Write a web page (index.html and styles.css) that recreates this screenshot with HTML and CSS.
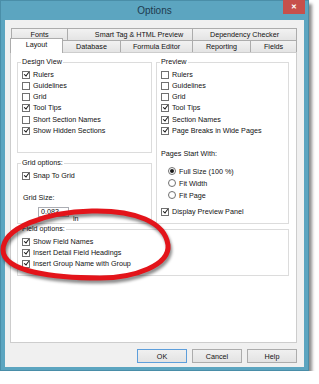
FILE: index.html
```html
<!DOCTYPE html>
<html lang="en">
<head>
    <meta charset="UTF-8">
    <title>Options</title>
    <link rel="stylesheet" href="styles.css">
</head>
<body>

<div class="dialog">
    <div class="titlebar">
        <span class="title">Options</span>
        <span class="close">&#x2715;</span>
    </div>

    <div class="client">
        <div class="tabs">
            <div class="tab-row back">
                <div class="tab t-fonts">Fonts</div>
                <div class="tab t-smart">Smart Tag &amp; HTML Preview</div>
                <div class="tab t-dep">Dependency Checker</div>
            </div>
            <div class="tab-row front">
                <div class="tab t-layout active">Layout</div>
                <div class="tab t-db">Database</div>
                <div class="tab t-formula">Formula Editor</div>
                <div class="tab t-rep">Reporting</div>
                <div class="tab t-fields">Fields</div>
            </div>
        </div>

        <div class="panel">
            <div class="cols">
                <div class="left-col">
                    <fieldset class="group design">
                        <legend>Design View</legend>
                        <div class="check"><span class="box on"></span>Rulers</div>
                        <div class="check"><span class="box"></span>Guidelines</div>
                        <div class="check"><span class="box"></span>Grid</div>
                        <div class="check"><span class="box on"></span>Tool Tips</div>
                        <div class="check spaced"><span class="box"></span>Short Section Names</div>
                        <div class="check"><span class="box on"></span>Show Hidden Sections</div>
                    </fieldset>

                    <fieldset class="group grid-opts">
                        <legend>Grid options:</legend>
                        <div class="check"><span class="box on"></span>Snap To Grid</div>
                        <div class="grid-size">Grid Size:</div>
                        <div class="size-row">
                            <span class="size-input">0.083</span>
                            <span class="unit">in</span>
                        </div>
                    </fieldset>
                </div>

                <fieldset class="group preview">
                    <legend>Preview</legend>
                    <div class="check"><span class="box"></span>Rulers</div>
                    <div class="check"><span class="box"></span>Guidelines</div>
                    <div class="check"><span class="box"></span>Grid</div>
                    <div class="check"><span class="box on"></span>Tool Tips</div>
                    <div class="check spaced"><span class="box on"></span>Section Names</div>
                    <div class="check"><span class="box on"></span>Page Breaks in Wide Pages</div>

                    <div class="pages-start">Pages Start With:</div>
                    <div class="radios">
                        <div class="radio"><span class="dot on"></span>Full Size (100 %)</div>
                        <div class="radio"><span class="dot"></span>Fit Width</div>
                        <div class="radio"><span class="dot"></span>Fit Page</div>
                    </div>
                    <div class="check display"><span class="box on"></span>Display Preview Panel</div>
                </fieldset>
            </div>

            <fieldset class="group fields">
                <legend>Field options:</legend>
                <div class="check"><span class="box on"></span>Show Field Names</div>
                <div class="check"><span class="box on"></span>Insert Detail Field Headings</div>
                <div class="check"><span class="box on"></span>Insert Group Name with Group</div>
            </fieldset>
        </div>

        <div class="buttons">
            <button class="btn default">OK</button>
            <button class="btn">Cancel</button>
            <button class="btn">Help</button>
        </div>
    </div>

    <!-- hand drawn highlight round the field options -->
    <svg class="mark" width="319" height="384" viewBox="0 0 319 384">
        <defs>
            <filter id="soft" x="-10%" y="-20%" width="120%" height="140%">
                <feGaussianBlur stdDeviation="1.6"/>
            </filter>
        </defs>
        <path d="M3,250 C3,228 45,212 92,211 C135,210 165,222 168,245 C170,265 135,278 100,278 C55,278 3,272 3,250 Z"
              fill="none" stroke="rgba(0,0,0,0.45)" stroke-width="5" transform="translate(1.5,3)" filter="url(#soft)"/>
        <path d="M3,250 C3,228 45,212 92,211 C135,210 165,222 168,245 C170,265 135,278 100,278 C55,278 3,272 3,250 Z"
              fill="none" stroke="#e3141a" stroke-width="5"/>
    </svg>
</div>

</body>
</html>
```

FILE: styles.css
```css
/* Win8 style options dialog */
body {
    margin: 0;
    background: #fff;
    font-family: "Liberation Sans", Arial, sans-serif;
    font-size: 7.2px;
    color: #111;
}
.dialog {
    position: relative;
    width: 309px;
    height: 371px;
    box-sizing: border-box;
    background: #5ca5c0;
    border: 1px solid #4a8ea8;
    box-shadow: 3px 4px 3px rgba(0, 0, 0, 0.45);
}
.titlebar {
    display: grid;
    grid-template-columns: 1fr auto 1fr;
    align-items: start;
    height: 19px;
}
.title {
    grid-column: 2;
    font-size: 10px;
    line-height: 19px;
    color: #1d3a4e;
}
.close {
    grid-column: 3;
    justify-self: end;
    width: 22px;
    height: 14px;
    margin-right: 3px;
    margin-top: -1px;
    background: #c7504b;
    color: #fff;
    font-size: 7px;
    font-weight: bold;
    line-height: 14px;
    text-align: center;
}
.client {
    height: 347px;
    margin: 0 4px 0 4px;
    padding: 8px 7px 0 5px;
    box-sizing: border-box;
    background: #f0f0f0;
}

/* tabs */
.tab-row {
    display: flex;
    height: 12px;
}
.tab-row.back {
    margin-left: 1px;
}
.tab {
    box-sizing: border-box;
    height: 12px;
    margin-left: -1px;
    border: 1px solid #acacac;
    border-bottom: none;
    background: linear-gradient(#f2f2f2, #e4e4e4);
    text-align: center;
    line-height: 11px;
    color: #111;
}
.tab:first-child {
    margin-left: 0;
}
.t-fonts { width: 57px; }
.t-smart { width: 126px; padding-left: 18px; }
.t-dep { width: 105px; }
.t-layout { width: 53px; }
.t-db { width: 59px; }
.t-formula { width: 73px; }
.t-rep { width: 59px; }
.t-fields { width: 47px; }
.tab.active {
    position: relative;
    z-index: 2;
    height: 15px;
    margin-top: -2px;
    margin-bottom: -1px;
    background: #fff;
    line-height: 12px;
}

/* tab page */
.panel {
    height: 291px;
    box-sizing: border-box;
    padding: 4px 7px 0 6px;
    background: #fff;
    border: 1px solid #cdcdcd;
}
.cols {
    display: grid;
    grid-template-columns: 135px 133px;
    column-gap: 4px;
}
.group {
    margin: 0;
    padding: 2px 4px 0 4px;
    min-width: 0;
    border: 1px solid #dcdcdc;
}
.group legend {
    padding: 0 1px;
    margin-left: -1px;
    line-height: 10px;
}
.design {
    padding-bottom: 16px;
}
.grid-opts {
    margin-top: 5px;
}
.preview {
    padding-bottom: 6px;
}
.fields {
    padding-bottom: 6px;
}

.check, .radio {
    display: flex;
    align-items: center;
    gap: 3px;
    height: 11px;
    white-space: nowrap;
}
.check.spaced {
    margin-top: 1px;
}
.box {
    position: relative;
    width: 8px;
    height: 8px;
    box-sizing: border-box;
    border: 1px solid #707070;
    background: #fff;
    flex: none;
}
.box.on::after {
    content: "";
    position: absolute;
    left: 2px;
    top: -0.5px;
    width: 1.6px;
    height: 4px;
    border: solid #111;
    border-width: 0 1.5px 1.5px 0;
    transform: rotate(38deg);
}

.grid-size {
    margin-top: 12px;
    margin-left: 1px;
    line-height: 9px;
}
.size-row {
    display: flex;
    align-items: flex-end;
    height: 16px;
    margin-top: 5px;
    padding-left: 16px;
}
.size-input {
    align-self: flex-start;
    width: 31px;
    height: 10px;
    box-sizing: border-box;
    border: 1px solid #abadb3;
    padding-left: 2px;
    line-height: 8px;
    background: #fff;
}
.unit {
    margin-left: 4px;
    line-height: 8px;
}

.pages-start {
    margin-top: 13px;
    line-height: 9px;
}
.radios {
    margin-top: 7px;
    padding-left: 7px;
}
.radio {
    height: 12px;
}
.dot {
    position: relative;
    width: 8px;
    height: 8px;
    box-sizing: border-box;
    border: 1px solid #707070;
    border-radius: 50%;
    background: #fff;
    flex: none;
}
.dot.on::after {
    content: "";
    position: absolute;
    left: 1px;
    top: 1px;
    width: 4px;
    height: 4px;
    border-radius: 50%;
    background: #1a1a1a;
}
.check.display {
    margin-top: 5px;
}

/* bottom buttons */
.buttons {
    display: flex;
    justify-content: flex-end;
    gap: 5px;
    margin-top: 6px;
    padding-right: 0;
}
.btn {
    width: 50px;
    height: 14px;
    padding: 0;
    font-family: "Liberation Sans", Arial, sans-serif;
    font-size: 7.2px;
    color: #111;
    background: linear-gradient(#f0f0f0, #e3e3e3);
    border: 1px solid #acacac;
}
.btn.default {
    border-color: #5d9edb;
}

.mark {
    position: absolute;
    left: -1px;
    top: -1px;
    pointer-events: none;
}
```
